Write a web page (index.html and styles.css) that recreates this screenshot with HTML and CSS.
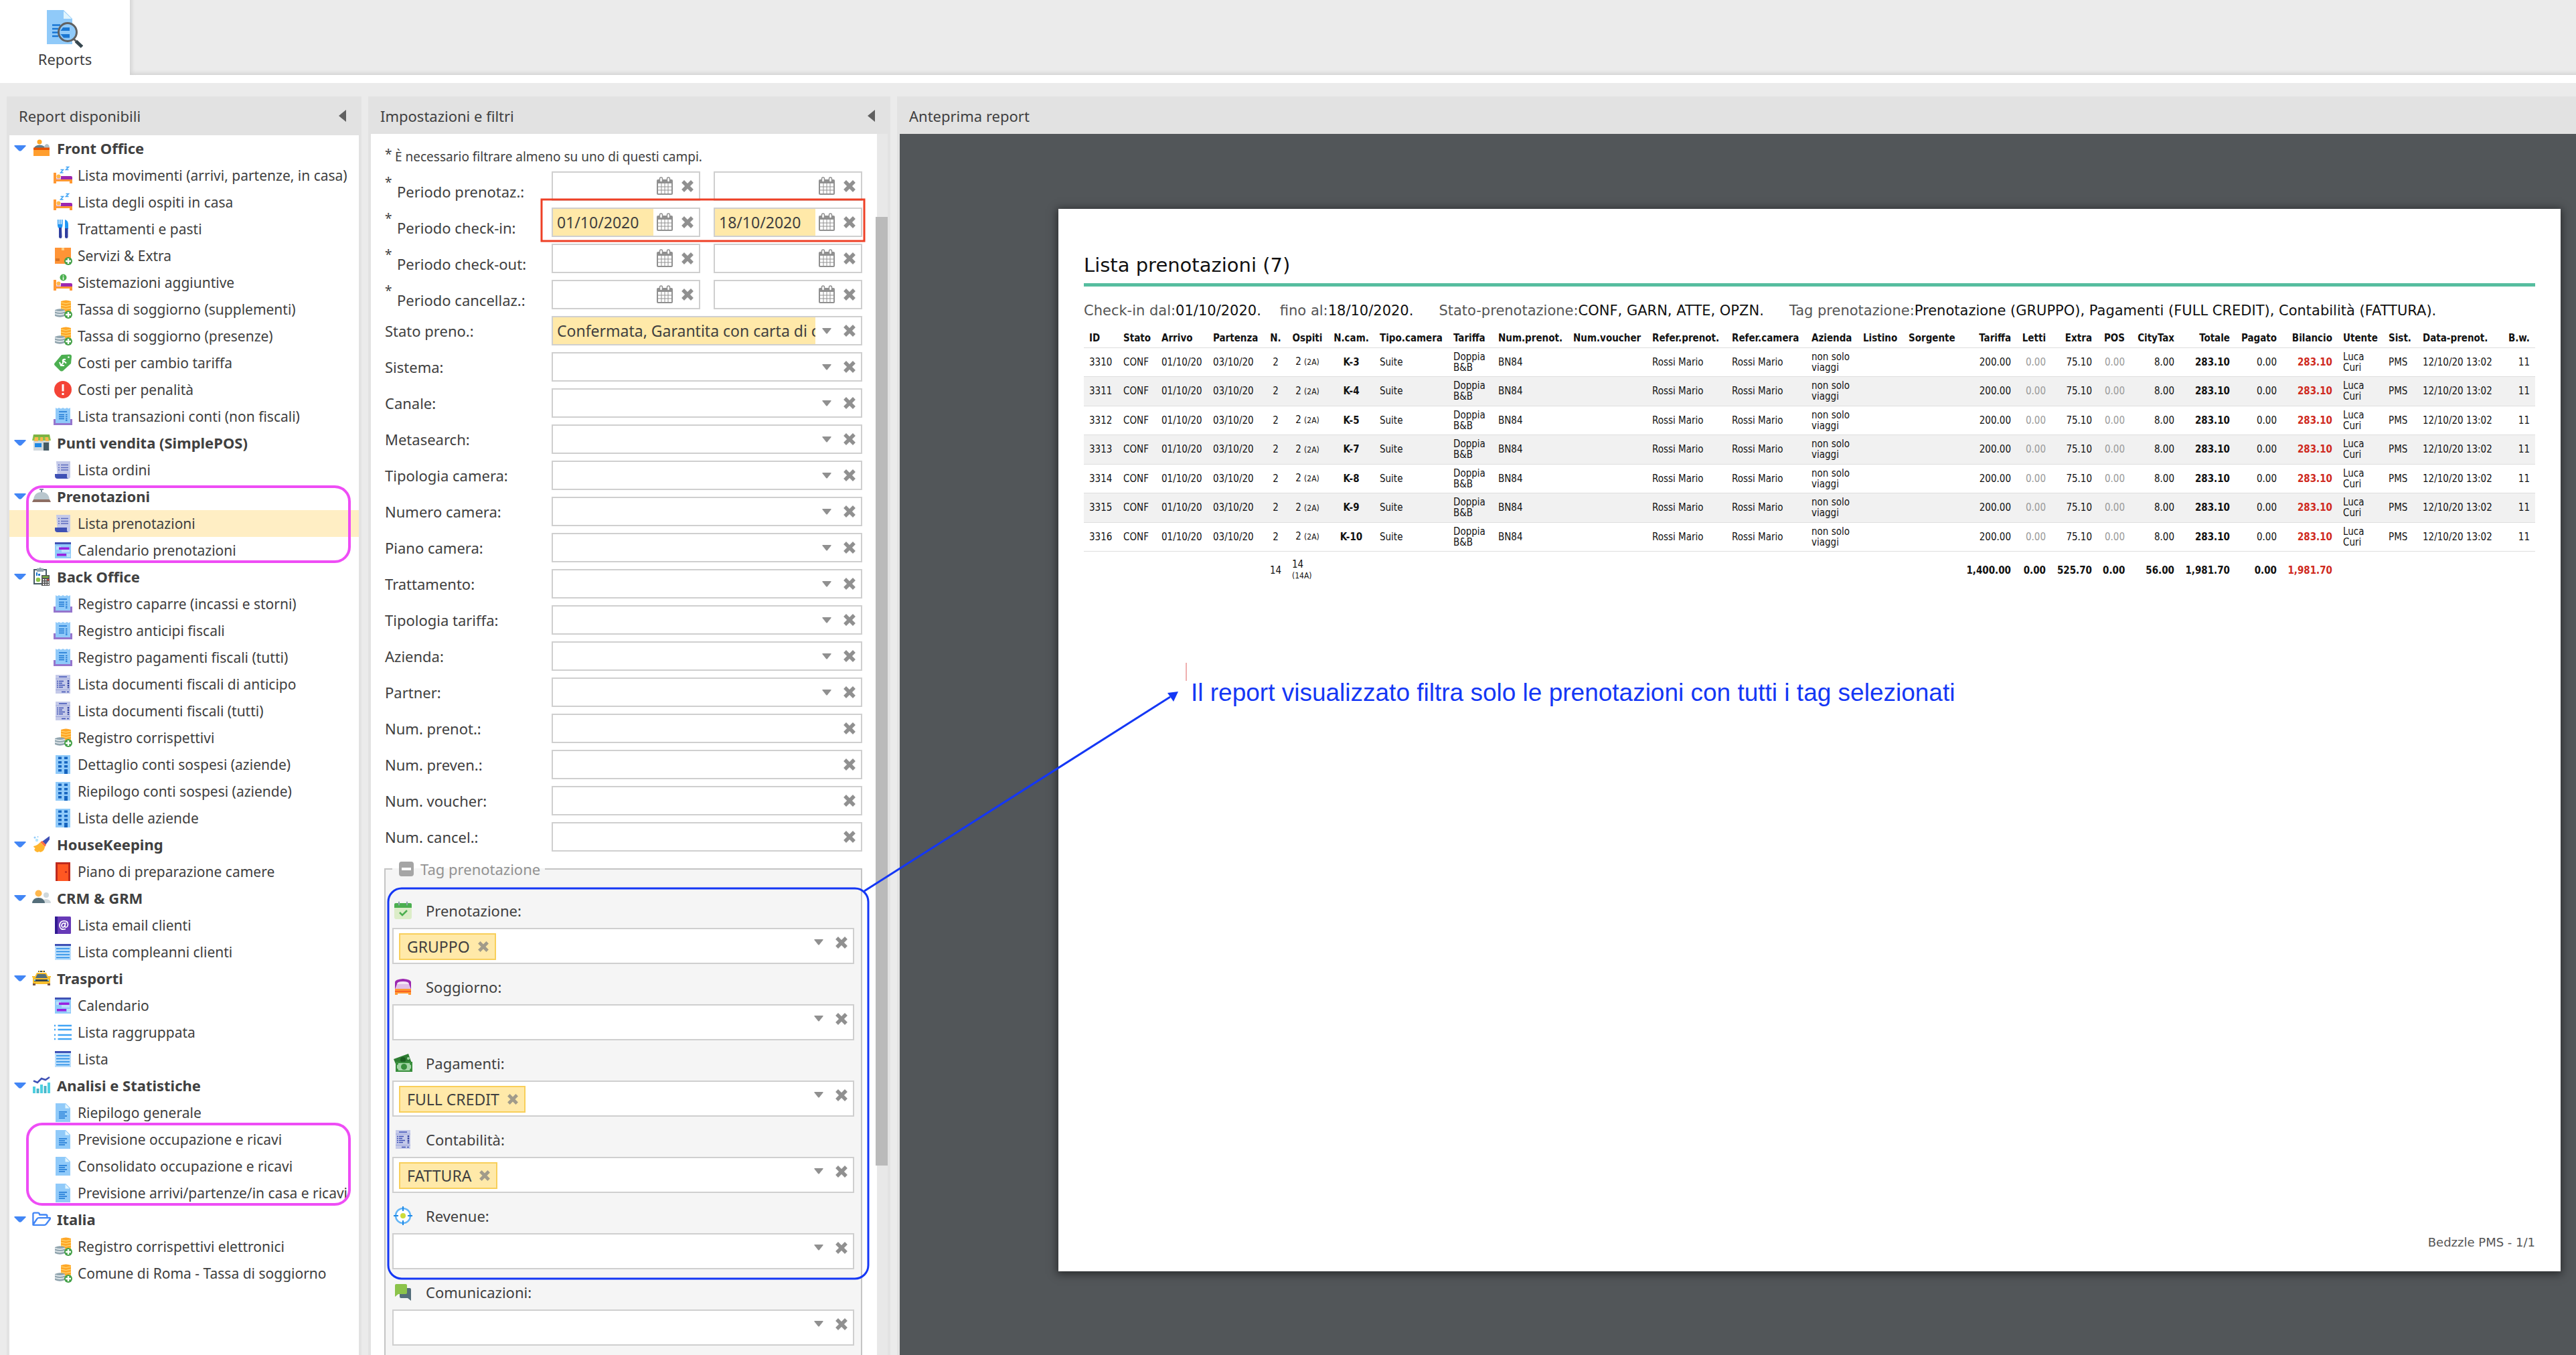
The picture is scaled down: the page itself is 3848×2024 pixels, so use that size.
FILE: index.html
```html
<!DOCTYPE html>
<html lang="it">
<head>
<meta charset="utf-8">
<title>Reports</title>
<link rel="stylesheet" href="styles.css">
</head>
<body>
<svg class="sprite" aria-hidden="true">
  <symbol id="caret" viewBox="0 0 14 9"><path d="M1 0h12q1 0 .6 1L8 8q-1 1-2 0L.4 1Q0 0 1 0z"/></symbol>
  <symbol id="open" viewBox="0 0 18 9"><path fill="#4286f5" d="M1 0h16q1 0 .4 1.400L11 8q-2 1.600-4 0L.6 1.400Q0 0 1 0z"/></symbol>
  <symbol id="cross" viewBox="0 0 18 18"><path d="M4 4l10 10M14 4L4 14" stroke="currentColor" stroke-width="5.500" stroke-linecap="square" fill="none"/></symbol>
  <symbol id="calendar" viewBox="0 0 24 28"><path fill="currentColor" d="M2 4h20q2 0 2 2v19q0 2-2 2H2q-2 0-2-2V6q0-2 2-2z"/><path fill="#fff" d="M2 10h4.500v4.500H2zM7.500 10h4v4.500h-4zM12.500 10h4v4.500h-4zM17.500 10H22v4.500h-4.500zM2 15.500h4.500v4H2zM7.500 15.500h4v4h-4zM12.500 15.500h4v4h-4zM17.500 15.500H22v4h-4.500zM2 20.500h4.500V25H2zM7.500 20.500h4V25h-4zM12.500 20.500h4V25h-4zM17.500 20.500H22V25h-4.500z"/><rect x="4.500" y="1" width="4" height="7" rx="2" fill="#fff" stroke="currentColor" stroke-width="1.500"/><rect x="15.500" y="1" width="4" height="7" rx="2" fill="#fff" stroke="currentColor" stroke-width="1.500"/></symbol>
  <symbol id="report" viewBox="0 0 54 57"><path fill="#90caf9" d="M0 0h25l13 13v38H0z"/><path fill="#e1f5fe" d="M25 1.500V13h12z"/><path stroke="#1976d2" stroke-width="2.500" d="M8 22.500h12M8 28h9M8 33.500h9M8 39h9"/><circle cx="31" cy="33" r="13.500" fill="#90caf9" stroke="#616161" stroke-width="3"/><path fill="#1976d2" d="M24 26h10v5H20.500zM20.500 36H34v5.500H25z"/><path stroke="#616161" stroke-width="3" d="M40.500 43.500l4 4"/><path stroke="#37474f" stroke-width="5" d="M43.500 46.500l9 8.500"/></symbol>
  <symbol id="reception" viewBox="0 0 28 28"><circle cx="11" cy="5" r="3.500" fill="#ffa726"/><path fill="#607d8b" d="M3 14q1-4 8-4.500 8 .5 8 4.500z"/><path fill="#b0bec5" d="M18 14q0-5 4-6 4 1 4 6z"/><path fill="#ff9e2e" d="M2 14h24v12H2z"/><path fill="#e65100" d="M2 13.500h24V17H2z"/></symbol>
  <symbol id="bedbase" viewBox="0 0 28 28"><path fill="#ff9833" d="M0 10h4v10h24v6h-4v-3H4v3H0z"/><path fill="#9c27b0" d="M11 15h15q2 0 2 2v3H11z"/><path fill="#e1bee7" d="M4 18h7v2H4z"/><circle cx="7.500" cy="15.500" r="3" fill="#ffb74d"/></symbol>
  <symbol id="bed" viewBox="0 0 28 28"><use href="#bedbase"/><path stroke="#42a5f5" stroke-width="1.500" fill="none" d="M10.500 5.500h4l-4 4.500h4M18.500 1.500h4l-4 4h4"/></symbol>
  <symbol id="bedinfo" viewBox="0 0 28 28"><use href="#bedbase"/><circle cx="14.500" cy="6.500" r="5" fill="#4caf50"/><path stroke="#fff" stroke-width="1.500" d="M14.500 3.500V5M14.500 6v4"/></symbol>
  <symbol id="cutlery" viewBox="0 0 28 28"><path fill="#2196f3" d="M6 0h1.500v7H9V0h1.500v7H12V0h1.500v9q0 3-2.500 4H8.500Q6 12 6 9zM17 0q5 1 5 8v6h-5z"/><path fill="#303f9f" d="M8 12h4l.5 14q0 2-2.200 2T8 26zM17 13h4.500v13q0 2-2.200 2T17 26z"/></symbol>
  <symbol id="plus" viewBox="0 0 28 28"><circle cx="22" cy="22" r="6" fill="#43a047"/><path stroke="#fff" stroke-width="2.500" d="M22 18v8M18 22h8"/></symbol>
  <symbol id="box" viewBox="0 0 28 28"><path fill="#ff9436" d="M2 2h24v24H2z"/><path fill="#ffcc80" d="M12 2h4v4h-4z"/><path stroke="#c2611b" stroke-width="1.300" d="M4 22v-4M6 22v-4M8 22v-4"/><use href="#plus"/></symbol>
  <symbol id="coins" viewBox="0 0 28 28"><path fill="#ffa726" d="M11 2q7.500-3 15 0v20H11z"/><path stroke="#ffe082" stroke-width="1" fill="none" d="M11 4q7.500 3 15 0M11 8q7.500 3 15 0M11 12q7.500 3 15 0M11 16q7.500 3 15 0"/><path fill="#90a4ae" d="M2 15q7.500-3.500 15 0v9q-7.500 3.500-15 0z"/><path stroke="#dfe6ea" stroke-width="1.800" fill="none" d="M2 16.500q7.500 3 15 0M2 20.500q7.500 3 15 0"/><use href="#plus"/></symbol>
  <symbol id="tag" viewBox="0 0 28 28"><path fill="#4caf50" d="M12 2l12-.5q3 0 3 3L26 15 14 26q-2 1-4 0L2 18q-2-2 0-4z"/><circle cx="22.500" cy="5.500" r="1.300" fill="#fff"/><path stroke="#fff" stroke-width="2" fill="none" d="M18 9q-5-1-4 3t-4 5M9 13l2 5 5 0M13 9.500l6 5"/></symbol>
  <symbol id="alert" viewBox="0 0 28 28"><circle cx="14" cy="14" r="13" fill="#f44336"/><path fill="#fff" d="M12.500 6h3v10.500h-3zM12.500 19h3v3h-3z"/></symbol>
  <symbol id="receipt" viewBox="0 0 28 28"><path fill="#9575cd" d="M0 18h28v9H0z"/><path fill="#90caf9" d="M3 1l2.500 1.500L8 1l3 1.500L14 1l3 1.500L20 1l2.500 1.500L25 1v23H3z"/><path stroke="#1976d2" stroke-width="1.500" d="M8 7h12M8 11.500h8M8 14.500h8M8 17.500h8M18 11.500h2.500M18 14.500h2.500M18 17.500h2.500M18 20h2.500"/></symbol>
  <symbol id="shop" viewBox="0 0 28 28"><path fill="#cfd8dc" d="M2 10h24v16H2z"/><path fill="#8bc34a" d="M2 2h24l2 9H0z"/><path fill="#ffb74d" d="M5 2h4v10H3zM12.500 2H16v10h-4zM19 2h4l2 10h-5z"/><path fill="#7cb342" d="M2 2h24v4H2z"/><path fill="#1e88e5" d="M4 15h10v6H4z"/><path fill="#455a64" d="M17 14h8v12h-8z"/></symbol>
  <symbol id="scroll" viewBox="0 0 28 28"><path fill="#c5cae9" d="M4 1h21v23q0 3-3 3H6z"/><path stroke="#5c6bc0" stroke-width="1.500" d="M7 6.500h2M11 6.500h11M7 10.500h2M11 10.500h11M7 14h2M11 14h11"/><path fill="#3f51b5" d="M2 20h18v4q0 3 3 3H6q-4 0-4-4z"/></symbol>
  <symbol id="bell" viewBox="0 0 28 28"><path fill="#78909c" d="M11 3h6v2h-2v4h-2V5h-2z"/><path fill="#b8c6cd" d="M2 20Q3 8 14 8t12 12z"/><path fill="#8d6e63" d="M2 19h24l2 4H0z"/></symbol>
  <symbol id="planner" viewBox="0 0 28 28"><path fill="#90caf9" d="M2 2h24v24H2z"/><path fill="#bbdefb" d="M4 8h7v5H4zM12 13h12v4H12zM20 19h5v5h-5z"/><path fill="#3f51b5" d="M2 2h24v3H2z"/><path fill="#9822e0" d="M8 9.500h15.500V13H8zM5 19h14v3.500H5z"/></symbol>
  <symbol id="clipboard" viewBox="0 0 28 28"><path fill="#fff" stroke="#455a64" stroke-width="2" d="M3 4h18v21H3z"/><path fill="#90a4ae" d="M7 2h3q2-3 4 0h3v5H7z"/><path fill="#1976d2" d="M6 8h2v5H6zM9 10h3v3H9z"/><circle cx="9" cy="19" r="3.300" fill="#8bc34a"/><path fill="#555" d="M14 12h12v16H14z"/><path fill="#7cb342" d="M15.500 13.500h9V16h-9z"/><path fill="#eee" d="M16 18h2v2h-2zM19.500 18h2v2h-2zM16 21.500h2v2h-2zM19.500 21.500h2v2h-2zM23 21.500h2v2h-2zM16 25h2v2h-2zM19.500 25h2v2h-2zM23 25h2v2h-2z"/><path fill="#f44336" d="M22.500 18h2.500v2h-2.500z"/></symbol>
  <symbol id="invoice" viewBox="0 0 28 28"><path fill="#c5cae9" d="M3 0h22v28H3z"/><path stroke="#3f51b5" stroke-width="1.500" d="M8 3h12M5 9.500h2M8 9.500h7M5 12.500h2M8 12.500h5M5 15.500h2M8 15.500h9M5 18.500h2M8 18.500h6M12 25.500h6M20 25.500h3"/><path stroke="#303f9f" stroke-width="2.500" stroke-dasharray="2.500 1" d="M22 8v12"/><path stroke="#9fa8da" d="M3 6h22M3 22.500h22"/></symbol>
  <symbol id="building" viewBox="0 0 28 28"><path fill="#90caf9" d="M3 0h22v28H3z"/><path fill="#1565c0" d="M7 2.500h5V6H7zM16 2.500h5V6h-5zM7 9h5v3.500H7zM16 9h5v3.500h-5zM7 15h5v3.500H7zM16 15h5v3.500h-5zM7 21h5v3.500H7zM16 21h5v7h-5z"/></symbol>
  <symbol id="broom" viewBox="0 0 28 28"><path fill="#3f51b5" d="M26 2v5l-6 8-5-5 8-6z"/><path fill="#ff7043" d="M15 9l6 6-2 3-7-7z"/><path fill="#ffb52e" d="M12 11l7 7q-1 7-7 8-2-2-3 0-4 0-6-4 2-1 1-3-1 1-2-2 6-1 10-6z"/><circle cx="4" cy="4" r="1.500" fill="#90caf9"/><circle cx="7" cy="8" r="2.200" fill="#b3e5fc"/><circle cx="8.500" cy="3" r="1" fill="#90caf9"/></symbol>
  <symbol id="door" viewBox="0 0 28 28"><path fill="#bf2a1d" d="M3 0h22v28H3z"/><path fill="#ff5722" d="M6 3h16v25H6z"/><circle cx="18.500" cy="14.500" r="1.600" fill="#bf2a1d"/></symbol>
  <symbol id="people" viewBox="0 0 28 28"><circle cx="21" cy="10" r="4" fill="#cfd8dc"/><path fill="#cfd8dc" d="M14 22q0-6 7-6 7 1 7 6z"/><circle cx="9.500" cy="7.500" r="5" fill="#ffb74d"/><path fill="#546e7a" d="M0 22q1-8 9.500-8T19 22z"/></symbol>
  <symbol id="mail" viewBox="0 0 28 28"><rect x="2" y="1" width="24" height="26" rx="1.500" fill="#673ab7"/><path fill="#311b92" d="M2 1h4v26H2z"/><path stroke="#fff" stroke-width="1.700" fill="none" d="M18 19.500q-8 2.500-9-4.500 0-7 6.500-7.500 6 0 6 5.500-.5 4-3 4-2 0-1.500-2l1-5M17.500 12.500q-1-2-3-1.500-2.500 1-2.500 4 1 3 3.500 1.500 1.500-1 2-4"/></symbol>
  <symbol id="sheet" viewBox="0 0 28 28"><path fill="#bbdefb" d="M2 2h24v24H2z"/><path fill="#3f51b5" d="M2 2h24v3H2z"/><path stroke="#1e88e5" stroke-width="1.500" d="M4 9h20M4 13.500h20M4 18h20M4 22.500h20"/></symbol>
  <symbol id="taxi" viewBox="0 0 28 28"><path fill="#fbc02d" d="M7 6h14l4 8H3zM1 13q13-3 26 0v10H1z"/><path fill="#546e7a" d="M8 8h12l3 6H5z"/><path fill="#37474f" d="M9 3h10v2H9zM3 16h22v3H3z"/><path fill="#fbc02d" d="M10 3h2v2h-2zM15 3h2v2h-2zM0 11h4v2H0zM24 11h4v2h-4z"/><path fill="#795548" d="M1 22h4v3H1zM23 22h4v3h-4z"/><path fill="#80deea" d="M3 16h2v2H3zM23 16h2v2h-2z"/></symbol>
  <symbol id="list" viewBox="0 0 28 28"><path stroke="#42a5f5" stroke-width="2.500" d="M1 4h2M6.500 4H27M1 10h2M6.500 10H27M1 18h2M6.500 18H27M1 24h2M6.500 24H27"/></symbol>
  <symbol id="chart" viewBox="0 0 28 28"><path fill="#4dd0e1" d="M1 16h4v10H1zM12 13h4v13h-4zM23 10h4v16h-4z"/><path fill="#4db6c9" d="M6.500 19h4v7h-4zM17.500 15h4v11h-4z"/><path stroke="#3f51b5" stroke-width="2.500" fill="none" d="M2 7.500L8 10l6-6 6 2 6-4"/></symbol>
  <symbol id="doc" viewBox="0 0 28 28"><path fill="#90caf9" d="M3 0h15l7 7v21H3z"/><path fill="#e1f5fe" d="M17.500 1v6.500H24z"/><path stroke="#1976d2" stroke-width="1.500" d="M8 13h12M8 16h9M8 19h12M8 22h9"/></symbol>
  <symbol id="folder" viewBox="0 0 30 22"><path stroke="#4286f5" stroke-width="2.500" stroke-linejoin="round" fill="none" d="M1.500 20V3q0-2 2-2h6q2 0 2.500 3h10q2 0 2 2v3M1.500 20l6-9q1-2 3-2h18q1 1 0 2l-6 8q-1 1.500-3 1.500h-16q-2 0-2-.5z"/></symbol>
  <symbol id="booked" viewBox="0 0 28 28"><path fill="#dcedc8" d="M1 7h26v17q0 3-3 3H4q-3 0-3-3z"/><path fill="#4caf50" d="M3 3h22q2 0 2 2v5H1V5q0-2 2-2z"/><path stroke="#90a4ae" stroke-width="2" stroke-linecap="round" d="M8 1.500v4M20 1.500v4"/><path stroke="#4caf50" stroke-width="2.500" fill="none" d="M9 17l4 4 7-7"/></symbol>
  <symbol id="stay" viewBox="0 0 28 28"><path fill="#9c27b0" d="M2 18V7q0-4 12-5 12 1 12 5v11z"/><path fill="#f3e5f5" d="M5 10q0-4 9-4t9 4z"/><path fill="#e1bee7" d="M2 18l3-8h18l3 8z"/><path fill="#ff9833" d="M2 17h24v9h-4v-2H6v2H2z"/><path fill="#f4511e" d="M2 20h24v1.500H2z"/></symbol>
  <symbol id="money" viewBox="0 0 28 28"><path fill="#2e7d32" d="M0 8l22-8 5 14-22 6z"/><circle cx="14" cy="9" r="4" fill="#1b5e20"/><circle cx="22" cy="7" r="2" fill="#a5d6a7"/><path fill="#388e3c" d="M3 12h25v15H3z"/><path fill="#a5d6a7" d="M7 14h17q0 3 2 3v5q-2 0-2 3H7q0-3-2-3v-5q2 0 2-3z"/><circle cx="15.500" cy="19.500" r="4.500" fill="#388e3c"/></symbol>
  <symbol id="target" viewBox="0 0 28 28"><circle cx="14" cy="14" r="11" fill="#fff" stroke="#64b5f6" stroke-width="2.500"/><circle cx="14" cy="14" r="4" fill="#cddc39"/><path stroke="#1e88e5" stroke-width="2" d="M14 0v7M14 21v7M0 14h7M21 14h7"/></symbol>
  <symbol id="chat" viewBox="0 0 28 28"><path fill="#546e7a" d="M11 8h13q2 0 2 2v17l-5-4H11q-2 0-2-2V10z"/><path fill="#8bc34a" d="M4 2h14q2 0 2 2v11q0 2-2 2H7l-5 4V4q0-2 2-2z"/></symbol>
</svg>

<header class="toolbar">
  <a class="tab" href="#reports"><svg class="tab-icon"><use href="#report"/></svg>Reports</a>
  <div class="toolbar-rest"></div>
</header>

<main class="workspace">
  <section class="panel panel-list">
    <header class="panel-head"><h2>Report disponibili</h2><button class="collapse" aria-label="Comprimi"></button></header>
    <nav class="panel-body tree">
      <h3><svg class="open"><use href="#open"/></svg><svg class="ico"><use href="#reception"/></svg>Front Office</h3>
      <a href="#r1"><svg class="ico"><use href="#bed"/></svg>Lista movimenti (arrivi, partenze, in casa)</a>
      <a href="#r2"><svg class="ico"><use href="#bed"/></svg>Lista degli ospiti in casa</a>
      <a href="#r3"><svg class="ico"><use href="#cutlery"/></svg>Trattamenti e pasti</a>
      <a href="#r4"><svg class="ico"><use href="#box"/></svg>Servizi &amp; Extra</a>
      <a href="#r5"><svg class="ico"><use href="#bedinfo"/></svg>Sistemazioni aggiuntive</a>
      <a href="#r6"><svg class="ico"><use href="#coins"/></svg>Tassa di soggiorno (supplementi)</a>
      <a href="#r7"><svg class="ico"><use href="#coins"/></svg>Tassa di soggiorno (presenze)</a>
      <a href="#r8"><svg class="ico"><use href="#tag"/></svg>Costi per cambio tariffa</a>
      <a href="#r9"><svg class="ico"><use href="#alert"/></svg>Costi per penalità</a>
      <a href="#r10"><svg class="ico"><use href="#receipt"/></svg>Lista transazioni conti (non fiscali)</a>
      <h3><svg class="open"><use href="#open"/></svg><svg class="ico"><use href="#shop"/></svg>Punti vendita (SimplePOS)</h3>
      <a href="#r11"><svg class="ico"><use href="#scroll"/></svg>Lista ordini</a>
      <h3><svg class="open"><use href="#open"/></svg><svg class="ico"><use href="#bell"/></svg>Prenotazioni</h3>
      <a href="#r12" class="selected"><svg class="ico"><use href="#scroll"/></svg>Lista prenotazioni</a>
      <a href="#r13"><svg class="ico"><use href="#planner"/></svg>Calendario prenotazioni</a>
      <h3><svg class="open"><use href="#open"/></svg><svg class="ico"><use href="#clipboard"/></svg>Back Office</h3>
      <a href="#r14"><svg class="ico"><use href="#receipt"/></svg>Registro caparre (incassi e storni)</a>
      <a href="#r15"><svg class="ico"><use href="#receipt"/></svg>Registro anticipi fiscali</a>
      <a href="#r16"><svg class="ico"><use href="#receipt"/></svg>Registro pagamenti fiscali (tutti)</a>
      <a href="#r17"><svg class="ico"><use href="#invoice"/></svg>Lista documenti fiscali di anticipo</a>
      <a href="#r18"><svg class="ico"><use href="#invoice"/></svg>Lista documenti fiscali (tutti)</a>
      <a href="#r19"><svg class="ico"><use href="#coins"/></svg>Registro corrispettivi</a>
      <a href="#r20"><svg class="ico"><use href="#building"/></svg>Dettaglio conti sospesi (aziende)</a>
      <a href="#r21"><svg class="ico"><use href="#building"/></svg>Riepilogo conti sospesi (aziende)</a>
      <a href="#r22"><svg class="ico"><use href="#building"/></svg>Lista delle aziende</a>
      <h3><svg class="open"><use href="#open"/></svg><svg class="ico"><use href="#broom"/></svg>HouseKeeping</h3>
      <a href="#r23"><svg class="ico"><use href="#door"/></svg>Piano di preparazione camere</a>
      <h3><svg class="open"><use href="#open"/></svg><svg class="ico"><use href="#people"/></svg>CRM &amp; GRM</h3>
      <a href="#r24"><svg class="ico"><use href="#mail"/></svg>Lista email clienti</a>
      <a href="#r25"><svg class="ico"><use href="#sheet"/></svg>Lista compleanni clienti</a>
      <h3><svg class="open"><use href="#open"/></svg><svg class="ico"><use href="#taxi"/></svg>Trasporti</h3>
      <a href="#r26"><svg class="ico"><use href="#planner"/></svg>Calendario</a>
      <a href="#r27"><svg class="ico"><use href="#list"/></svg>Lista raggruppata</a>
      <a href="#r28"><svg class="ico"><use href="#sheet"/></svg>Lista</a>
      <h3><svg class="open"><use href="#open"/></svg><svg class="ico"><use href="#chart"/></svg>Analisi e Statistiche</h3>
      <a href="#r29"><svg class="ico"><use href="#doc"/></svg>Riepilogo generale</a>
      <a href="#r30"><svg class="ico"><use href="#doc"/></svg>Previsione occupazione e ricavi</a>
      <a href="#r31"><svg class="ico"><use href="#doc"/></svg>Consolidato occupazione e ricavi</a>
      <a href="#r32"><svg class="ico"><use href="#doc"/></svg>Previsione arrivi/partenze/in casa e ricavi</a>
      <h3><svg class="open"><use href="#open"/></svg><svg class="ico"><use href="#folder"/></svg>Italia</h3>
      <a href="#r33"><svg class="ico"><use href="#coins"/></svg>Registro corrispettivi elettronici</a>
      <a href="#r34"><svg class="ico"><use href="#coins"/></svg>Comune di Roma - Tassa di soggiorno</a>
    </nav>
  </section>

  <section class="panel panel-filters">
    <header class="panel-head"><h2>Impostazioni e filtri</h2><button class="collapse" aria-label="Comprimi"></button></header>
    <div class="panel-body filters">
      <form class="form">
        <p class="hint"><span class="star">*</span>È necessario filtrare almeno su uno di questi campi.</p>
        <div class="row"><span class="star">*</span><label class="dated" for="p1">Periodo prenotaz.:</label>
          <div class="field"><input id="p1"><button type="button" aria-label="Calendario"><svg class="cal"><use href="#calendar"/></svg></button><button type="button" aria-label="Cancella"><svg class="x"><use href="#cross"/></svg></button></div>
          <div class="field"><input aria-label="Periodo prenotaz. fino al"><button type="button" aria-label="Calendario"><svg class="cal"><use href="#calendar"/></svg></button><button type="button" aria-label="Cancella"><svg class="x"><use href="#cross"/></svg></button></div></div>
        <div class="row"><span class="star">*</span><label class="dated" for="p2">Periodo check-in:</label>
          <div class="field"><input id="p2" class="filled" value="01/10/2020"><button type="button" aria-label="Calendario"><svg class="cal"><use href="#calendar"/></svg></button><button type="button" aria-label="Cancella"><svg class="x"><use href="#cross"/></svg></button></div>
          <div class="field"><input class="filled" value="18/10/2020" aria-label="Periodo check-in fino al"><button type="button" aria-label="Calendario"><svg class="cal"><use href="#calendar"/></svg></button><button type="button" aria-label="Cancella"><svg class="x"><use href="#cross"/></svg></button></div></div>
        <div class="row"><span class="star">*</span><label class="dated" for="p3">Periodo check-out:</label>
          <div class="field"><input id="p3"><button type="button" aria-label="Calendario"><svg class="cal"><use href="#calendar"/></svg></button><button type="button" aria-label="Cancella"><svg class="x"><use href="#cross"/></svg></button></div>
          <div class="field"><input aria-label="Periodo check-out fino al"><button type="button" aria-label="Calendario"><svg class="cal"><use href="#calendar"/></svg></button><button type="button" aria-label="Cancella"><svg class="x"><use href="#cross"/></svg></button></div></div>
        <div class="row"><span class="star">*</span><label class="dated" for="p4">Periodo cancellaz.:</label>
          <div class="field"><input id="p4"><button type="button" aria-label="Calendario"><svg class="cal"><use href="#calendar"/></svg></button><button type="button" aria-label="Cancella"><svg class="x"><use href="#cross"/></svg></button></div>
          <div class="field"><input aria-label="Periodo cancellaz. fino al"><button type="button" aria-label="Calendario"><svg class="cal"><use href="#calendar"/></svg></button><button type="button" aria-label="Cancella"><svg class="x"><use href="#cross"/></svg></button></div></div>
        <div class="row"><label for="f1">Stato preno.:</label><div class="field"><select id="f1" class="filled"><option>Confermata, Garantita con carta di credito</option></select><svg class="down"><use href="#caret"/></svg><button type="button" aria-label="Cancella"><svg class="x"><use href="#cross"/></svg></button></div></div>
        <div class="row"><label for="f2">Sistema:</label><div class="field"><select id="f2"></select><svg class="down"><use href="#caret"/></svg><button type="button" aria-label="Cancella"><svg class="x"><use href="#cross"/></svg></button></div></div>
        <div class="row"><label for="f3">Canale:</label><div class="field"><select id="f3"></select><svg class="down"><use href="#caret"/></svg><button type="button" aria-label="Cancella"><svg class="x"><use href="#cross"/></svg></button></div></div>
        <div class="row"><label for="f4">Metasearch:</label><div class="field"><select id="f4"></select><svg class="down"><use href="#caret"/></svg><button type="button" aria-label="Cancella"><svg class="x"><use href="#cross"/></svg></button></div></div>
        <div class="row"><label for="f5">Tipologia camera:</label><div class="field"><select id="f5"></select><svg class="down"><use href="#caret"/></svg><button type="button" aria-label="Cancella"><svg class="x"><use href="#cross"/></svg></button></div></div>
        <div class="row"><label for="f6">Numero camera:</label><div class="field"><select id="f6"></select><svg class="down"><use href="#caret"/></svg><button type="button" aria-label="Cancella"><svg class="x"><use href="#cross"/></svg></button></div></div>
        <div class="row"><label for="f7">Piano camera:</label><div class="field"><select id="f7"></select><svg class="down"><use href="#caret"/></svg><button type="button" aria-label="Cancella"><svg class="x"><use href="#cross"/></svg></button></div></div>
        <div class="row"><label for="f8">Trattamento:</label><div class="field"><select id="f8"></select><svg class="down"><use href="#caret"/></svg><button type="button" aria-label="Cancella"><svg class="x"><use href="#cross"/></svg></button></div></div>
        <div class="row"><label for="f9">Tipologia tariffa:</label><div class="field"><select id="f9"></select><svg class="down"><use href="#caret"/></svg><button type="button" aria-label="Cancella"><svg class="x"><use href="#cross"/></svg></button></div></div>
        <div class="row"><label for="f10">Azienda:</label><div class="field"><select id="f10"></select><svg class="down"><use href="#caret"/></svg><button type="button" aria-label="Cancella"><svg class="x"><use href="#cross"/></svg></button></div></div>
        <div class="row"><label for="f11">Partner:</label><div class="field"><select id="f11"></select><svg class="down"><use href="#caret"/></svg><button type="button" aria-label="Cancella"><svg class="x"><use href="#cross"/></svg></button></div></div>
        <div class="row"><label for="f12">Num. prenot.:</label><div class="field"><input id="f12"><button type="button" aria-label="Cancella"><svg class="x"><use href="#cross"/></svg></button></div></div>
        <div class="row"><label for="f13">Num. preven.:</label><div class="field"><input id="f13"><button type="button" aria-label="Cancella"><svg class="x"><use href="#cross"/></svg></button></div></div>
        <div class="row"><label for="f14">Num. voucher:</label><div class="field"><input id="f14"><button type="button" aria-label="Cancella"><svg class="x"><use href="#cross"/></svg></button></div></div>
        <div class="row"><label for="f15">Num. cancel.:</label><div class="field"><input id="f15"><button type="button" aria-label="Cancella"><svg class="x"><use href="#cross"/></svg></button></div></div>
        <fieldset>
          <legend><button type="button" class="fold" aria-label="Chiudi gruppo"></button>Tag prenotazione</legend>
          <div class="tagrow"><label for="t1"><svg class="ico"><use href="#booked"/></svg>Prenotazione:</label><div class="field tagbox"><span class="chip">GRUPPO<button type="button" aria-label="Rimuovi"><svg><use href="#cross"/></svg></button></span><select id="t1"></select><svg class="down"><use href="#caret"/></svg><button type="button" aria-label="Cancella"><svg class="x"><use href="#cross"/></svg></button></div></div>
          <div class="tagrow"><label for="t2"><svg class="ico"><use href="#stay"/></svg>Soggiorno:</label><div class="field tagbox"><select id="t2"></select><svg class="down"><use href="#caret"/></svg><button type="button" aria-label="Cancella"><svg class="x"><use href="#cross"/></svg></button></div></div>
          <div class="tagrow"><label for="t3"><svg class="ico"><use href="#money"/></svg>Pagamenti:</label><div class="field tagbox"><span class="chip">FULL CREDIT<button type="button" aria-label="Rimuovi"><svg><use href="#cross"/></svg></button></span><select id="t3"></select><svg class="down"><use href="#caret"/></svg><button type="button" aria-label="Cancella"><svg class="x"><use href="#cross"/></svg></button></div></div>
          <div class="tagrow"><label for="t4"><svg class="ico"><use href="#invoice"/></svg>Contabilità:</label><div class="field tagbox"><span class="chip">FATTURA<button type="button" aria-label="Rimuovi"><svg><use href="#cross"/></svg></button></span><select id="t4"></select><svg class="down"><use href="#caret"/></svg><button type="button" aria-label="Cancella"><svg class="x"><use href="#cross"/></svg></button></div></div>
          <div class="tagrow"><label for="t5"><svg class="ico"><use href="#target"/></svg>Revenue:</label><div class="field tagbox"><select id="t5"></select><svg class="down"><use href="#caret"/></svg><button type="button" aria-label="Cancella"><svg class="x"><use href="#cross"/></svg></button></div></div>
          <div class="tagrow"><label for="t6"><svg class="ico"><use href="#chat"/></svg>Comunicazioni:</label><div class="field tagbox"><select id="t6"></select><svg class="down"><use href="#caret"/></svg><button type="button" aria-label="Cancella"><svg class="x"><use href="#cross"/></svg></button></div></div>
        </fieldset>
      </form>
      <div class="scrollbar"><div class="thumb"></div></div>
    </div>
  </section>

  <section class="panel panel-preview">
    <header class="panel-head"><h2>Anteprima report</h2></header>
    <div class="viewer">
      <article class="page">
        <h1>Lista prenotazioni (7)</h1>
        <div class="criteria">
          <div class="period"><span>Check-in dal:<b>01/10/2020.</b></span><span>fino al:<b>18/10/2020.</b></span></div>
          <span>Stato-prenotazione:<b>CONF, GARN, ATTE, OPZN.</b></span>
          <span>Tag prenotazione:<b>Prenotazione (GRUPPO), Pagamenti (FULL CREDIT), Contabilità (FATTURA).</b></span>
        </div>
        <table>
          <colgroup><col><col><col><col><col><col><col><col><col><col><col><col><col><col><col><col><col><col><col><col><col><col><col><col><col><col><col><col></colgroup>
          <thead><tr><th>ID<th>Stato<th>Arrivo<th>Partenza<th>N.<th>Ospiti<th>N.cam.<th>Tipo.camera<th>Tariffa<th>Num.prenot.<th>Num.voucher<th>Refer.prenot.<th>Refer.camera<th>Azienda<th>Listino<th>Sorgente<th>Tariffa<th>Letti<th>Extra<th>POS<th>CityTax<th>Totale<th>Pagato<th>Bilancio<th>Utente<th>Sist.<th>Data-prenot.<th>B.w.</tr></thead>
          <tbody>
          <tr><td>3310<td>CONF<td>01/10/20<td>03/10/20<td>2<td>2 <small>(2A)</small><td>K-3<td>Suite<td>Doppia<br>B&amp;B<td>BN84<td><td>Rossi Mario<td>Rossi Mario<td>non solo viaggi<td><td><td>200.00<td>0.00<td>75.10<td>0.00<td>8.00<td>283.10<td>0.00<td>283.10<td>Luca<br>Curi<td>PMS<td>12/10/20 13:02<td>11</tr>
          <tr><td>3311<td>CONF<td>01/10/20<td>03/10/20<td>2<td>2 <small>(2A)</small><td>K-4<td>Suite<td>Doppia<br>B&amp;B<td>BN84<td><td>Rossi Mario<td>Rossi Mario<td>non solo viaggi<td><td><td>200.00<td>0.00<td>75.10<td>0.00<td>8.00<td>283.10<td>0.00<td>283.10<td>Luca<br>Curi<td>PMS<td>12/10/20 13:02<td>11</tr>
          <tr><td>3312<td>CONF<td>01/10/20<td>03/10/20<td>2<td>2 <small>(2A)</small><td>K-5<td>Suite<td>Doppia<br>B&amp;B<td>BN84<td><td>Rossi Mario<td>Rossi Mario<td>non solo viaggi<td><td><td>200.00<td>0.00<td>75.10<td>0.00<td>8.00<td>283.10<td>0.00<td>283.10<td>Luca<br>Curi<td>PMS<td>12/10/20 13:02<td>11</tr>
          <tr><td>3313<td>CONF<td>01/10/20<td>03/10/20<td>2<td>2 <small>(2A)</small><td>K-7<td>Suite<td>Doppia<br>B&amp;B<td>BN84<td><td>Rossi Mario<td>Rossi Mario<td>non solo viaggi<td><td><td>200.00<td>0.00<td>75.10<td>0.00<td>8.00<td>283.10<td>0.00<td>283.10<td>Luca<br>Curi<td>PMS<td>12/10/20 13:02<td>11</tr>
          <tr><td>3314<td>CONF<td>01/10/20<td>03/10/20<td>2<td>2 <small>(2A)</small><td>K-8<td>Suite<td>Doppia<br>B&amp;B<td>BN84<td><td>Rossi Mario<td>Rossi Mario<td>non solo viaggi<td><td><td>200.00<td>0.00<td>75.10<td>0.00<td>8.00<td>283.10<td>0.00<td>283.10<td>Luca<br>Curi<td>PMS<td>12/10/20 13:02<td>11</tr>
          <tr><td>3315<td>CONF<td>01/10/20<td>03/10/20<td>2<td>2 <small>(2A)</small><td>K-9<td>Suite<td>Doppia<br>B&amp;B<td>BN84<td><td>Rossi Mario<td>Rossi Mario<td>non solo viaggi<td><td><td>200.00<td>0.00<td>75.10<td>0.00<td>8.00<td>283.10<td>0.00<td>283.10<td>Luca<br>Curi<td>PMS<td>12/10/20 13:02<td>11</tr>
          <tr><td>3316<td>CONF<td>01/10/20<td>03/10/20<td>2<td>2 <small>(2A)</small><td>K-10<td>Suite<td>Doppia<br>B&amp;B<td>BN84<td><td>Rossi Mario<td>Rossi Mario<td>non solo viaggi<td><td><td>200.00<td>0.00<td>75.10<td>0.00<td>8.00<td>283.10<td>0.00<td>283.10<td>Luca<br>Curi<td>PMS<td>12/10/20 13:02<td>11</tr>
          </tbody>
          <tfoot><tr><td><td><td><td><td>14<td>14<br><small>(14A)</small><td><td><td><td><td><td><td><td><td><td><td>1,400.00<td>0.00<td>525.70<td>0.00<td>56.00<td>1,981.70<td>0.00<td>1,981.70<td><td><td><td></tr></tfoot>
        </table>
        <footer>Bedzzle PMS - 1/1</footer>
      </article>
    </div>
  </section>
</main>

<svg class="marks" aria-hidden="true">
  <rect x="41" y="727" width="481" height="112" rx="22" stroke="#ee4df5" stroke-width="4"/>
  <rect x="41" y="1679" width="481" height="120" rx="22" stroke="#ee4df5" stroke-width="4"/>
  <rect x="809" y="298" width="482" height="62" stroke="#ee4026" stroke-width="3"/>
  <rect x="580" y="1327" width="717" height="583" rx="20" stroke="#1437f5" stroke-width="3"/>
  <path d="M1291 1331L1748 1041" stroke="#1437f5" stroke-width="3"/>
  <path d="M1760 1033l-7 15-9-13z" fill="#1437f5"/>
  <path d="M1772 990v27" stroke="#e06060" stroke-width="1"/>
</svg>
<p class="note">Il report visualizzato filtra solo le prenotazioni con tutti i tag selezionati</p>
</body>
</html>
```
FILE: styles.css
```css
* { box-sizing: border-box; }

body {
  margin: 0;
  height: 100vh;
  display: flex;
  flex-direction: column;
  overflow: hidden;
  position: relative;
  background: #ebebeb;
  color: #404040;
  font: 22px/28px "Noto Sans", sans-serif;
}

h1, h2, h3, p { margin: 0; font-weight: normal; }
a { color: inherit; text-decoration: none; }
button { border: 0; padding: 0; background: none; color: inherit; font: inherit; }
input, select { font: inherit; color: inherit; border: 0; border-radius: 0; outline: 0; appearance: none; background: #fff; }
.sprite { position: absolute; width: 0; height: 0; }
.ico { width: 28px; height: 28px; flex: none; }

/* toolbar */
.toolbar { display: flex; height: 124px; flex: none; background: #fff; }
.tab {
  width: 194px;
  padding-top: 15px;
  display: flex;
  flex-direction: column;
  align-items: center;
}
.tab-icon { width: 54px; height: 57px; margin-bottom: 2px; }
.toolbar-rest {
  flex: 1;
  height: 112px;
  background: #ebebeb;
  box-shadow: inset 5px -5px 6px -3px rgba(0, 0, 0, .12);
}

/* panels */
.workspace {
  flex: 1;
  min-height: 0;
  display: flex;
  gap: 10px;
  padding: 20px 0 0 10px;
}
.panel {
  display: flex;
  flex-direction: column;
  min-height: 0;
  background: #e2e2e2;
  padding: 0 4px;
}
.panel-list { width: 530px; flex: none; }
.panel-filters { width: 780px; flex: none; }
.panel-preview { flex: 1; min-width: 0; padding-right: 0; }
.panel-head {
  height: 56px;
  flex: none;
  display: flex;
  align-items: center;
  justify-content: space-between;
  padding: 2px 19px 0 14px;
}
.panel-head h2 { font-size: 22px; }
.collapse {
  border: solid transparent;
  border-width: 9px 11px 9px 0;
  border-right-color: #606060;
}
.panel-body { flex: 1; min-height: 0; overflow: hidden; background: #fff; }

/* report tree */
.tree { border-top: 2px solid #e2e2e2; font-size: 21px; }
.tree h3, .tree a { display: flex; align-items: center; height: 40px; }
.tree h3 { font-size: 22px; font-weight: bold; padding: 0 0 2px 7px; }
.tree h3 .ico { margin: 0 9px 0 9px; }
.tree a { padding-left: 66px; gap: 8px; white-space: nowrap; }
.tree .selected { background: #ffeec4; }
.open { width: 18px; height: 9px; flex: none; }

/* filter form */
.filters { display: flex; }
.form { flex: 1; padding: 18px 22px 0 21px; }
.scrollbar { width: 16px; background: #e8e8e8; }
.thumb { width: 18px; height: 1417px; margin: 124px 0 0 -2px; background: #bababa; }
.hint { display: flex; height: 38px; font-size: 19px; line-height: 28px; padding-top: 2px; }
.hint .star { width: 15px; margin-top: -4px; }
.star { width: 18px; font-size: 19px; line-height: 28px; color: #404040; }
.row { display: flex; height: 44px; margin-bottom: 10px; }
.row label { width: 249px; padding-top: 8px; }
.row .dated { width: 231px; padding-top: 16px; }
.row .field { flex: 1; min-width: 0; }
.row .field + .field { margin-left: 20px; }
.row .star { margin-top: 2px; }
.field {
  display: flex;
  align-items: center;
  border: 2px solid #cfcfcf;
  background: #fff;
  color: #909090;
}
.field input, .field select {
  flex: 1;
  width: 0;
  min-width: 0;
  height: 100%;
  padding: 0 0 0 6px;
  color: #404040;
  font-size: 23px;
}
.field .filled { background: #ffe9a9; }
.field > button { width: 34px; display: flex; justify-content: center; }
.down { width: 14px; height: 9px; margin: 0 10px; fill: #909090; flex: none; }
.x { width: 18px; height: 18px; }
.cal { width: 24px; height: 28px; }

fieldset {
  margin: 12px 0 0 -1px;
  padding: 14px 10px 40px;
  border: 2px solid #c4c4c4;
  background: #f5f5f5;
  min-width: 0;
}
legend { display: flex; align-items: center; padding: 0 7px 0 10px; color: #929292; }
.fold {
  width: 22px;
  height: 22px;
  margin-right: 10px;
  border: solid #a5a5a5;
  border-width: 9px 4px;
  border-radius: 4px;
  background: #fff;
}
.tagrow { padding-top: 20px; }
.tagrow label { display: flex; align-items: center; gap: 20px; height: 28px; margin: 0 0 12px 2px; }
.tagbox { height: 54px; align-items: flex-start; }
.tagbox > button { height: 40px; align-items: center; }
.tagbox .down { margin-top: 15px; }
.chip {
  height: 40px;
  margin: 6px 0 0 8px;
  padding: 0 9px 0 10px;
  display: flex;
  align-items: center;
  gap: 12px;
  border: 2px solid #f8cf5a;
  background: #ffe9a9;
  color: #404040;
  font-size: 23px;
}
.chip button { width: 16px; height: 16px; color: #a19b8a; }
.chip svg { display: block; width: 16px; height: 16px; }

/* report preview */
.viewer { flex: 1; min-height: 0; padding: 112px 23px 0 237px; background: #525659; overflow: hidden; }
.page {
  display: flex;
  flex-direction: column;
  aspect-ratio: 297 / 210;
  padding: 66px 38px 29px;
  background: #fff;
  color: #111;
  box-shadow: 0 2px 12px 2px rgba(0, 0, 0, .5);
  font-family: "DejaVu Sans", sans-serif;
}
.page h1 { font-size: 29px; line-height: 36px; padding-bottom: 9px; border-bottom: 5px solid #56bd9f; }
.criteria { display: flex; gap: 38px; margin-top: 22px; font-size: 21px; line-height: 28px; color: #555; white-space: nowrap; }
.criteria b { font-weight: normal; color: #111; }
.period { display: flex; gap: 28px; }
.page footer { margin-top: auto; text-align: right; font-size: 18px; line-height: 28px; color: #555; }

table {
  width: 100%;
  table-layout: fixed;
  border-collapse: collapse;
  font-family: "DejaVu Sans Condensed", "DejaVu Sans", sans-serif;
  font-size: 15px;
  line-height: 16px;
}
th, td { padding: 0 8px; text-align: left; white-space: nowrap; }
td:nth-child(14) { white-space: normal; }
thead tr { height: 41px; }
th { vertical-align: bottom; padding-bottom: 6px; }
tbody tr { height: 43px; }
tbody tr:nth-child(even) { height: 44px; background: #f1f1f1; }
thead tr, tbody tr { border-bottom: 1px solid #dedede; }
tfoot tr { height: 57px; }
small { font-size: 12px; }
th:nth-child(5), td:nth-child(5),
th:nth-child(6), tbody td:nth-child(6),
th:nth-child(7), td:nth-child(7) { text-align: center; }
th:nth-child(n+17):nth-child(-n+24),
td:nth-child(n+17):nth-child(-n+24),
th:nth-child(28), td:nth-child(28) { text-align: right; }
td:nth-child(7), td:nth-child(22), td:nth-child(24),
tfoot td:nth-child(n+17) { font-weight: bold; }
td:nth-child(24) { color: #cf2a20; }
tbody td:nth-child(18), tbody td:nth-child(20) { color: #999; }

col:nth-child(1), col:nth-child(26) { width: 51px; }
col:nth-child(2) { width: 57px; }
col:nth-child(3), col:nth-child(14) { width: 77px; }
col:nth-child(4), col:nth-child(16) { width: 85px; }
col:nth-child(5) { width: 33px; }
col:nth-child(6) { width: 62px; }
col:nth-child(7), col:nth-child(19) { width: 69px; }
col:nth-child(8) { width: 110px; }
col:nth-child(9) { width: 67px; }
col:nth-child(10) { width: 112px; }
col:nth-child(11) { width: 118px; }
col:nth-child(12), col:nth-child(13) { width: 119px; }
col:nth-child(15), col:nth-child(25) { width: 68px; }
col:nth-child(17) { width: 84px; }
col:nth-child(18) { width: 52px; }
col:nth-child(20) { width: 49px; }
col:nth-child(21) { width: 74px; }
col:nth-child(22), col:nth-child(24) { width: 83px; }
col:nth-child(23) { width: 70px; }
col:nth-child(27) { width: 126px; }
col:nth-child(28) { width: 50px; }

/* annotations drawn over the screen */
.marks { position: absolute; inset: 0; width: 100%; height: 100%; fill: none; pointer-events: none; }
.note {
  position: absolute;
  left: 1779px;
  top: 1015px;
  color: #1437f5;
  font: 37px/40px "Liberation Sans", Arial, sans-serif;
  white-space: nowrap;
}
```
